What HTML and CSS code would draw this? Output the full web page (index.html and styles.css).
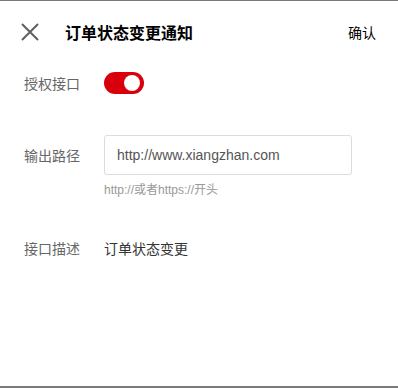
FILE: index.html
```html
<!DOCTYPE html>
<html lang="zh-CN">
<head>
    <meta charset="UTF-8">
    <meta name="viewport" content="width=device-width, initial-scale=1.0">
    <title>订单状态变更通知</title>
    <link rel="stylesheet" href="styles.css">
</head>
<body>
    <div class="panel">
        <div class="header">
            <span class="close">
                <svg width="18" height="18" viewBox="0 0 18 18">
                    <path d="M1 1L17 17M17 1L1 17" stroke="#5f5f5f" stroke-width="2" fill="none"/>
                </svg>
            </span>
            <h2 class="title">订单状态变更通知</h2>
            <span class="confirm">确认</span>
        </div>
        <div class="form">
            <div class="row row-switch">
                <label class="label">授权接口</label>
                <span class="switch"><span class="knob"></span></span>
            </div>
            <div class="row row-input">
                <label class="label" for="outputPath">输出路径</label>
                <input type="text" id="outputPath" class="text-input" value="http://www.xiangzhan.com">
            </div>
            <div class="hint">http://或者https://开头</div>
            <div class="row row-desc">
                <label class="label">接口描述</label>
                <span class="value">订单状态变更</span>
            </div>
        </div>
    </div>
</body>
</html>
```

FILE: styles.css
```css
body {
    margin: 0;
    font-family: "Liberation Sans", "Noto Sans CJK SC", sans-serif;
    background: #fff;
}
.panel {
    height: 388px;
    box-sizing: border-box;
    border-top: 1px solid #7a7a7a;
    border-bottom: 2px solid #7a7a7a;
}
.header {
    display: flex;
    align-items: center;
    height: 62px;
    padding: 0 22px 0 21px;
}
.close {
    display: flex;
    width: 18px;
    height: 18px;
    margin-right: 26px;
}
.title {
    flex: 1;
    margin: 0;
    font-size: 16px;
    font-weight: bold;
    color: #000;
}
.confirm {
    font-size: 14px;
    color: #000;
}
.form {
    padding-left: 24px;
}
.row {
    display: flex;
    align-items: center;
}
.label {
    width: 80px;
    font-size: 14px;
    color: #666;
}
.row-switch {
    margin-top: 9px;
}
.switch {
    display: flex;
    align-items: center;
    justify-content: flex-end;
    width: 40px;
    height: 22px;
    box-sizing: border-box;
    padding-right: 4px;
    border-radius: 11px;
    background: #d9000b;
}
.knob {
    width: 16px;
    height: 16px;
    border-radius: 50%;
    background: #fff;
}
.row-input {
    margin-top: 41px;
}
.text-input {
    width: 248px;
    height: 40px;
    box-sizing: border-box;
    padding: 0 12px;
    border: 1px solid #dcdcdc;
    border-radius: 3px;
    font-family: inherit;
    font-size: 14px;
    color: #555;
    outline: none;
}
.hint {
    margin: 7px 0 0 80px;
    font-size: 12px;
    line-height: 16px;
    color: #999;
}
.row-desc {
    margin-top: 41px;
    line-height: 20px;
}
.value {
    font-size: 14px;
    color: #333;
}
```
